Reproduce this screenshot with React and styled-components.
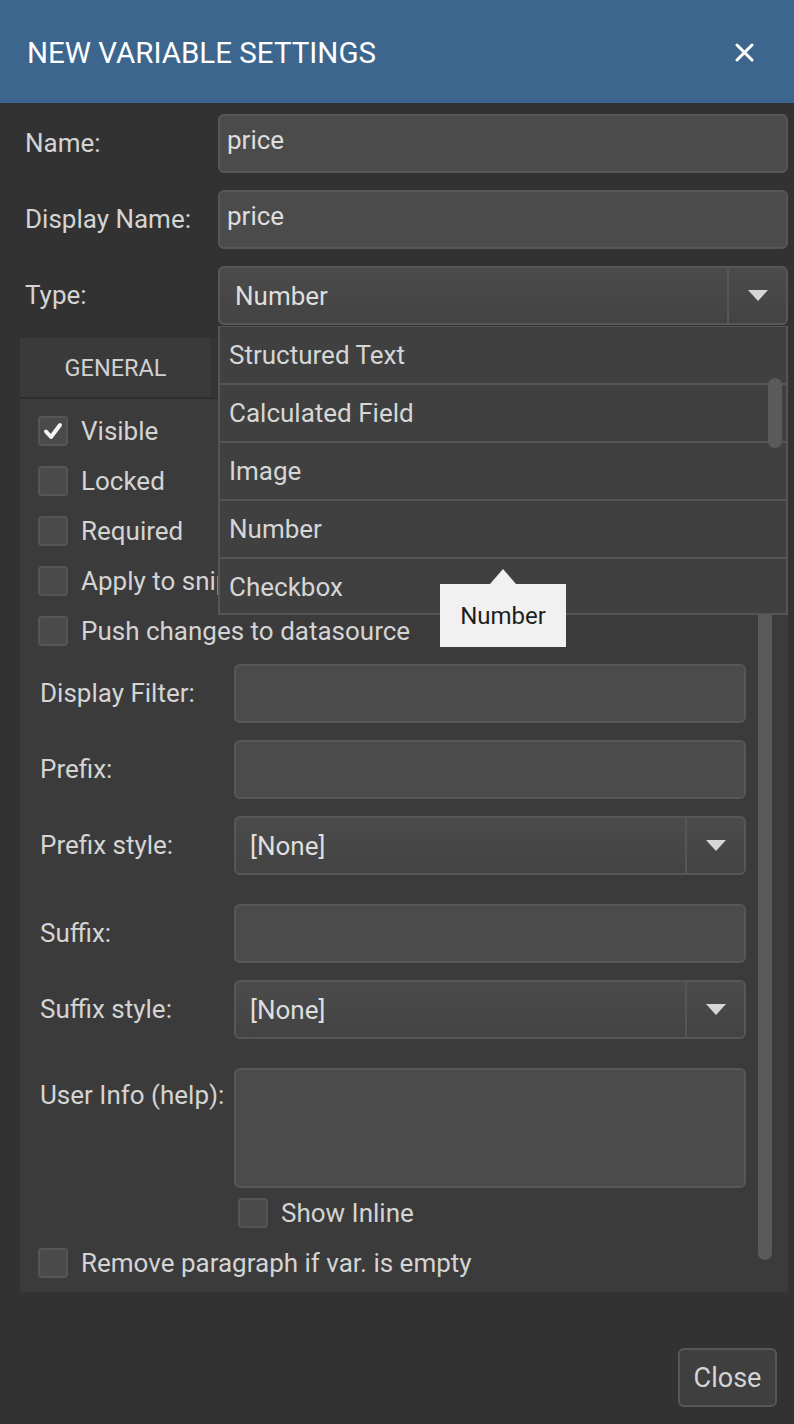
import React from 'react'
import styled, { createGlobalStyle } from 'styled-components'

const Global = createGlobalStyle`
  html, body { margin: 0; padding: 0; background: #323232; }
  * { box-sizing: border-box; }
`

const Page = styled.div`
  width: 794px;
  height: 1424px;
  background: #323232;
  font-family: Roboto, "Liberation Sans", sans-serif;
  color: #d4d4d4;
  display: flex;
  flex-direction: column;
  overflow: hidden;
`

const Header = styled.div`
  height: 103px;
  flex: none;
  background: #3c668e;
  display: flex;
  align-items: center;
  justify-content: space-between;
  padding: 2px 40px 0 27px;
  color: #fff;
  font-size: 29.5px;
`

const TopForm = styled.div`
  flex: none;
  padding: 11px 6px 0 25px;
  display: flex;
  flex-direction: column;
  gap: 17px;
`

const Row = styled.div`
  display: flex;
  flex: none;
  align-items: ${p => (p.$top ? 'flex-start' : 'center')};
`

const Label = styled.div`
  width: ${p => p.$w}px;
  flex: none;
  font-size: 26px;
  color: #d4d4d4;
  padding-top: ${p => (p.$top ? '12px' : '0')};
  margin-top: ${p => (p.$top ? '0' : '-2px')};
`

const Input = styled.div`
  flex: 1;
  height: ${p => p.$h || 59}px;
  background: #4b4b4b;
  border: 2px solid #575757;
  border-radius: 6px;
  font-size: 26px;
  color: #dedede;
  padding: 9px 7px;
  line-height: 1.2;
`

const Select = styled.div`
  flex: 1;
  height: 59px;
  background: linear-gradient(#4b4b4b, #434343);
  border: 2px solid #575757;
  border-radius: 6px;
  display: flex;
  align-items: stretch;
  font-size: 26px;
  color: #dedede;
`

const SelectValue = styled.div`
  flex: 1;
  display: flex;
  align-items: center;
  padding-left: ${p => p.$pad}px;
`

const SelectArrow = styled.div`
  width: 59px;
  border-left: 2px solid #565656;
  display: flex;
  align-items: center;
  justify-content: center;
`

const Tri = styled.div`
  width: 0;
  height: 0;
  border-left: 10px solid transparent;
  border-right: 10px solid transparent;
  border-top: 11px solid #d6d6d6;
`

const Panel = styled.div`
  flex: none;
  margin: 13px 6px 0 20px;
  height: 954px;
  background: #3b3b3b;
  display: flex;
  flex-direction: column;
  overflow: hidden;
`

const Tabs = styled.div`
  height: 61px;
  flex: none;
  display: flex;
  background: #353535;
  border-bottom: 2px solid #2f2f2f;
`

const Tab = styled.div`
  width: 193px;
  background: #3a3a3a;
  border-right: 2px solid #333;
  display: flex;
  align-items: center;
  justify-content: center;
  font-size: 23.5px;
  color: #d0d0d0;
`

const Body = styled.div`
  flex: 1;
  display: flex;
  align-items: flex-start;
  padding: 7px 0 0 18px;
`

const Content = styled.div`
  width: 708px;
  flex: none;
  display: flex;
  flex-direction: column;
`

const Scroll = styled.div`
  width: 14px;
  flex: none;
  height: 864px;
  margin: -10px 0 0 12px;
  background: #5a5a5a;
  border-radius: 0 0 7px 7px;
`

const Check = styled.div`
  display: flex;
  flex: none;
  align-items: center;
  gap: 13px;
  height: 50px;
  font-size: 26px;
  color: #d4d4d4;
  white-space: nowrap;
  padding-left: ${p => p.$indent || 0}px;
`

const Box = styled.div`
  width: 30px;
  height: 30px;
  flex: none;
  background: #4a4a4a;
  border: 2px solid #555;
  border-radius: 4px;
  display: flex;
  align-items: center;
  justify-content: center;
`

const Fields = styled.div`
  display: flex;
  flex: none;
  flex-direction: column;
  gap: ${p => p.$gap}px;
  margin-top: ${p => p.$mt}px;
  padding-left: 2px;
`

const Dropdown = styled.div`
  position: absolute;
  left: 218px;
  top: 326px;
  width: 570px;
  height: 289px;
  background: #404040;
  border: 2px solid #555;
  border-top: 1px solid #555;
  overflow: hidden;
`

const Option = styled.div`
  height: 58px;
  border-bottom: 2px solid #555;
  display: flex;
  align-items: center;
  padding-left: 9px;
  font-size: 26px;
  color: #d6d6d6;
`

const ListThumb = styled.div`
  position: absolute;
  right: 4px;
  top: 51px;
  width: 14px;
  height: 70px;
  border-radius: 7px;
  background: #5a5a5a;
`

const Tooltip = styled.div`
  position: absolute;
  left: 440px;
  top: 584px;
  width: 126px;
  height: 63px;
  background: #f1f1f1;
  color: #1e1e1e;
  font-size: 24px;
  display: flex;
  align-items: center;
  justify-content: center;
  padding-top: 1px;
  &::before {
    content: '';
    position: absolute;
    left: 50px;
    top: -15px;
    border-left: 13px solid transparent;
    border-right: 13px solid transparent;
    border-bottom: 15px solid #f1f1f1;
  }
`

const Footer = styled.div`
  flex: 1;
  display: flex;
  justify-content: flex-end;
  align-items: flex-start;
  padding: 56px 17px 0 0;
`

const Button = styled.div`
  width: 99px;
  height: 59px;
  background: #3f3f3f;
  border: 2px solid #575757;
  border-radius: 6px;
  display: flex;
  align-items: center;
  justify-content: center;
  font-size: 27px;
  color: #d4d4d4;
`

const checks = [
  { label: 'Visible', on: true },
  { label: 'Locked' },
  { label: 'Required' },
  { label: 'Apply to snippets' },
  { label: 'Push changes to datasource' },
]

const types = ['Structured Text', 'Calculated Field', 'Image', 'Number', 'Checkbox']

function CheckRow({ label, on, indent }) {
  return (
    <Check $indent={indent}>
      <Box>
        {on && (
          <svg width="20" height="18" viewBox="0 0 20 18">
            <path d="M3 9.5 L8 15 L17 3" fill="none" stroke="#f4f4f4" strokeWidth="4" strokeLinecap="round" strokeLinejoin="round" />
          </svg>
        )}
      </Box>
      {label}
    </Check>
  )
}

export default function App() {
  return (
    <Page>
      <Global />
      <Header>
        <span>NEW VARIABLE SETTINGS</span>
        <svg width="19" height="19" viewBox="0 0 19 19">
          <path d="M2 2 L17 17 M17 2 L2 17" stroke="#fff" strokeWidth="3" strokeLinecap="round" />
        </svg>
      </Header>

      <TopForm>
        <Row>
          <Label $w={193}>Name:</Label>
          <Input>price</Input>
        </Row>
        <Row>
          <Label $w={193}>Display Name:</Label>
          <Input>price</Input>
        </Row>
        <Row>
          <Label $w={193}>Type:</Label>
          <Select>
            <SelectValue $pad={15}>Number</SelectValue>
            <SelectArrow><Tri /></SelectArrow>
          </Select>
        </Row>
      </TopForm>

      <Panel>
        <Tabs>
          <Tab>GENERAL</Tab>
        </Tabs>
        <Body>
          <Content>
            {checks.map(c => <CheckRow key={c.label} {...c} />)}
            <Fields $gap={17} $mt={8}>
              <Row>
                <Label $w={194}>Display Filter:</Label>
                <Input />
              </Row>
              <Row>
                <Label $w={194}>Prefix:</Label>
                <Input />
              </Row>
              <Row>
                <Label $w={194}>Prefix style:</Label>
                <Select>
                  <SelectValue $pad={14}>[None]</SelectValue>
                  <SelectArrow><Tri /></SelectArrow>
                </Select>
              </Row>
            </Fields>
            <Fields $gap={17} $mt={29}>
              <Row>
                <Label $w={194}>Suffix:</Label>
                <Input />
              </Row>
              <Row>
                <Label $w={194}>Suffix style:</Label>
                <Select>
                  <SelectValue $pad={14}>[None]</SelectValue>
                  <SelectArrow><Tri /></SelectArrow>
                </Select>
              </Row>
            </Fields>
            <Fields $gap={0} $mt={29}>
              <Row $top>
                <Label $w={194} $top>User Info (help):</Label>
                <Input $h={120} />
              </Row>
              <CheckRow label="Show Inline" indent={198} />
            </Fields>
            <CheckRow label="Remove paragraph if var. is empty" />
          </Content>
          <Scroll />
        </Body>
      </Panel>

      <Footer>
        <Button>Close</Button>
      </Footer>

      <Dropdown>
        {types.map(t => <Option key={t}>{t}</Option>)}
        <ListThumb />
      </Dropdown>
      <Tooltip>Number</Tooltip>
    </Page>
  )
}
